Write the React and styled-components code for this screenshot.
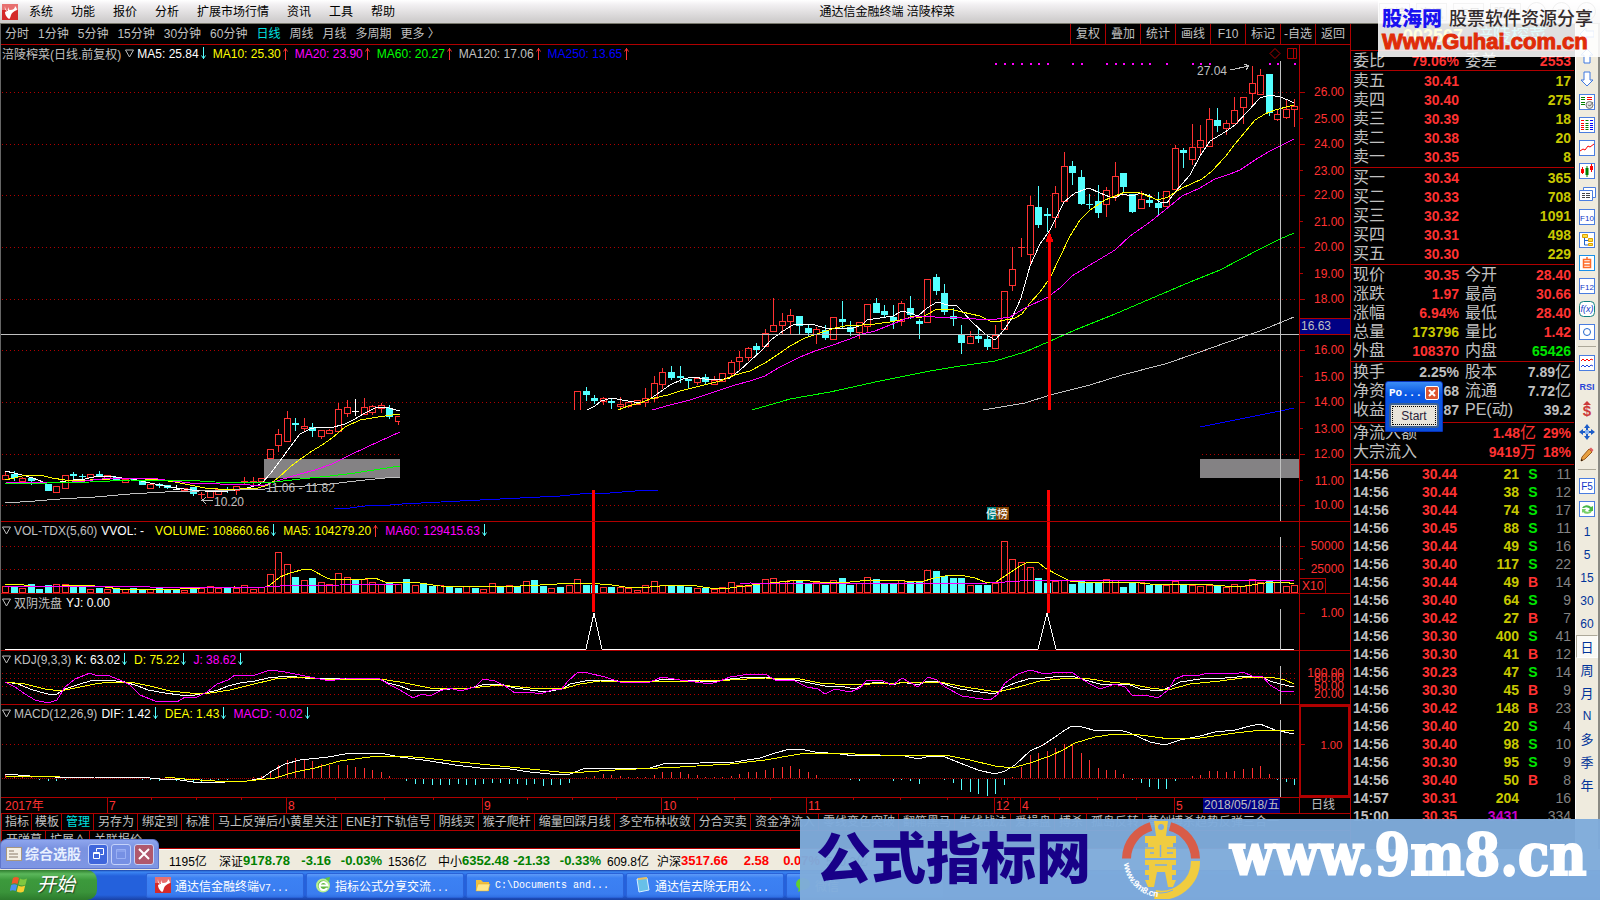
import React from 'react';
import styled, { createGlobalStyle, css } from 'styled-components';

const GlobalStyle = createGlobalStyle`
    * {
        box-sizing: border-box;
    }

    body {
        margin: 0;
        background: #000000;
        overflow: hidden;
        font-family: "Liberation Sans", "Noto Sans CJK SC", sans-serif;
        font-size: 12px;
    }

    button {
        font-family: inherit;
        font-size: inherit;
        padding: 0;
        margin: 0;
        border: 0;
        background: none;
        white-space: nowrap;
    }
`

const RED = '#ff3232';
const LINE = '#b00000';
const CYAN = '#54ffff';
const GREY = '#c0c0c0';
const YELLOW = '#ffff00';
const MAGENTA = '#ff00ff';

/* ---------- page frame ---------- */

const Page = styled.div`
    position: relative;
    display: flex;
    flex-direction: column;
    height: 100vh;
    background: #000000;
    overflow: hidden;
`

const MenuBar = styled.header`
    display: flex;
    align-items: center;
    height: 24px;
    flex: none;
    padding-left: 2px;
    background: linear-gradient(#ffffff, #f2f0f2 20%, #cfcdcd 90%);
    border-bottom: 1px solid #77776b;
`

const MenuList = styled.nav`
    display: flex;
    gap: 18px;
    margin-left: 11px;
`

const MenuButton = styled.button`
    color: #000000;
    line-height: 20px;
`

const WindowTitle = styled.h1`
    flex: 1;
    margin: 0;
    font-size: 12px;
    font-weight: normal;
    line-height: 20px;
    text-align: center;
    color: #000000;
`

const WindowTools = styled.div`
    display: flex;
    align-items: center;
    gap: 6px;
    padding-right: 4px;
`

const ToolTab = styled.button`
    width: 31px;
    height: 18px;
    border: 1px solid #999999;
    color: #333333;
`

const RoundTool = styled.button`
    width: 19px;
    height: 19px;
    border: 1px solid #777777;
    border-radius: 50%;
    line-height: 14px;
`

const Main = styled.main`
    display: flex;
    flex: 1;
    min-height: 0;
`

const ChartColumn = styled.section`
    display: flex;
    flex-direction: column;
    flex: 1;
    min-width: 0;
    border-left: 1px solid #666666;
`

/* ---------- period bar ---------- */

const PeriodBar = styled.div`
    display: flex;
    justify-content: space-between;
    height: 21px;
    flex: none;
    border-bottom: 1px solid ${LINE};
`

const PeriodList = styled.div`
    display: flex;
    gap: 9px;
    padding-left: 4px;
`

const PeriodButton = styled.button`
    color: ${props => props.$active ? '#00e0e0' : GREY};
    line-height: 20px;
`

const ActionList = styled.div`
    display: flex;
`

const ActionButton = styled.button`
    width: 35px;
    border-left: 1px solid ${LINE};
    color: ${GREY};
    line-height: 20px;
`

/* ---------- chart panels ---------- */

const Panel = styled.div`
    position: relative;
    display: flex;
    flex: ${props => props.$weight} 1 0;
    min-height: 0;
    border-bottom: 1px solid ${LINE};
`

const Plot = styled.svg`
    display: block;
    flex: 1;
    min-width: 0;
    height: 100%;
    shape-rendering: crispEdges;
`

const AxisBox = styled.div`
    width: 51px;
    flex: none;
    border-left: 1px solid ${LINE};
    ${props => props.$selected && css`
        border: 2px solid ${LINE};
    `}
`

const AxisPlot = styled.svg`
    display: block;
    width: 100%;
    height: 100%;
    font-size: 12px;
    shape-rendering: crispEdges;
`

const Legend = styled.div`
    position: absolute;
    top: 0;
    left: 1px;
    right: 51px;
    display: flex;
    align-items: center;
    height: 17px;
    white-space: nowrap;
    color: ${GREY};
`

const LegendName = styled.span`
    margin: 0 4px 0 3px;
`

const StockLegendName = styled.span`
    margin-right: 4px;
`

const LegendItem = styled.span`
    display: flex;
    align-items: center;
    gap: 2px;
    margin-left: ${props => props.$spaced ? '3px' : '0'};
    margin-right: ${props => props.$plain ? '11px' : '7px'};
    color: ${props => props.$color};
`

const LegendMarks = styled.svg`
    margin-left: auto;
`

/* ---------- date axis and tabs ---------- */

const DateRow = styled.div`
    display: flex;
    height: 16px;
    flex: none;
    border-bottom: 1px solid ${LINE};
`

const DatePlot = styled(Plot)`
    font-size: 12px;
`

const PeriodName = styled.div`
    width: 51px;
    padding-right: 4px;
    border-left: 1px solid ${LINE};
    color: ${GREY};
    line-height: 15px;
    text-align: center;
`

const TabRow = styled.div`
    display: flex;
    height: ${props => props.$last ? '18px' : '17px'};
    flex: none;
    overflow: hidden;
    border-bottom: 1px solid ${LINE};
`

const Tab = styled.button`
    flex: none;
    padding: ${props => props.$narrow ? '0 2px 0 3px' : '0 3px 0 4px'};
    border-left: 1px solid ${LINE};
    color: ${props => props.$active ? '#00e0e0' : GREY};
    line-height: 16px;
`

/* ---------- quote panel ---------- */

const QuotePanel = styled.aside`
    position: relative;
    width: 225px;
    flex: none;
    padding-right: 1px;
    overflow: hidden;
    border-left: 1px solid ${LINE};
    font-size: 14px;
`

const StockName = styled.div`
    display: flex;
    gap: 12px;
    height: 26px;
    padding-left: 52px;
    font-size: 18px;
    line-height: 24px;
    color: #00e0e0;

    b {
        color: ${YELLOW};
    }
`

const QuoteGroup = styled.div`
    border-top: 1px solid ${LINE};
    padding: 0 3px ${props => props.$bottom || 0}px 2px;
`

const QuoteTable = styled.table`
    width: 100%;
    table-layout: fixed;
    border-collapse: collapse;

    th, td {
        height: ${props => props.$rowHeight || 19}px;
        padding: 0;
        line-height: 18px;
        white-space: nowrap;
    }
`

const Label = styled.th`
    font-size: 16px;
    font-weight: normal;
    text-align: left;
    color: ${GREY};
    ${props => props.$second && css`
        && {
            padding-left: 6px;
        }
    `}
`

const Value = styled.td`
    font-weight: ${props => props.$light ? 'normal' : 'bold'};
    text-align: ${props => props.$align || 'right'};
    color: ${props => props.$color};
`

const Unit = styled.span`
    font-size: 16px;
    font-weight: normal;
`

/* small floating window over the quotes */
const Popup = styled.div`
    position: absolute;
    left: 34px;
    top: 357px;
    width: 58px;
    height: 51px;
    padding: 0 3px 3px;
    border: 1px solid #0831b8;
    border-radius: 3px 3px 0 0;
    background: linear-gradient(#3b8cf5, #0a58e4 12px, #0a4fdc);
`

const PopupTitle = styled.div`
    display: flex;
    justify-content: space-between;
    align-items: center;
    height: 21px;
    color: #ffffff;
    font-family: "Liberation Mono", monospace;
    font-size: 11px;
    font-weight: bold;
`

const PopupClose = styled.button`
    width: 14px;
    height: 14px;
    border: 1px solid #ffffff;
    border-radius: 2px;
    background: #dd5530;

    svg {
        display: block;
    }
`

const PopupButton = styled.button`
    display: block;
    width: 100%;
    height: 25px;
    border: 2px solid #3d6193;
    border-radius: 3px;
    background: #e8e4da;
    outline: 1px dotted #000000;
    outline-offset: -4px;
    color: #281c38;
    font-size: 12px;
`

/* ---------- side tool strip ---------- */

const SideBar = styled.nav`
    display: flex;
    flex-direction: column;
    width: 25px;
    flex: none;
    overflow: hidden;
    background: #efebde;
    border-left: 1px solid #ffffff;
    border-right: 2px solid #8a8a84;
`

const SideButton = styled.button`
    display: flex;
    align-items: center;
    justify-content: center;
    flex: none;
    height: ${props => props.$first ? '20px' : '23px'};
    color: #003399;
    font-size: ${props => props.$cjk ? '13px' : '12px'};
    ${props => props.$active && css`
        background: #fbfaf5;
        border: 1px solid #aca899;
        border-right-color: #ffffff;
        border-bottom-color: #ffffff;
    `}
`

const SideRule = styled.div`
    height: 8px;
    flex: none;
    margin: 0 2px;
    background: linear-gradient(#aca899, #aca899) 0 3px / 100% 1px no-repeat;
`

/* ---------- status bar, task bar ---------- */

const StatusBar = styled.footer`
    display: flex;
    align-items: center;
    height: 21px;
    flex: none;
    padding-left: 169px;
    background: #efebde;
    border-top: 1px solid #ffffff;
    white-space: nowrap;
    color: #000000;
`

const StatusGroup = styled.span`
    display: grid;
    grid-template-columns: ${props => props.$short ? '50px' : '24px 46px 42px 51px 56px'};
    align-items: center;
    flex: none;
`

const StatusNumber = styled.b`
    font-size: 13px;
    text-align: right;
    color: ${props => props.$up ? '#ff0000' : '#008000'};
`

const StatusTotal = styled.span`
    padding-left: ${props => props.$short ? '0' : '6px'};
`

const ToolWindow = styled.div`
    position: absolute;
    left: 0;
    bottom: 31px;
    display: flex;
    align-items: center;
    gap: 3px;
    width: 159px;
    height: 30px;
    padding: 0 4px 0 5px;
    border: 1px solid #6076cc;
    border-radius: 6px 6px 0 0;
    background: linear-gradient(#8ea6ee, #7a92e0 30%, #7e96e4);
`

const ToolWindowTitle = styled.span`
    flex: 1;
    font-size: 14px;
    font-weight: bold;
    line-height: 20px;
    color: #e8f0ff;
`

const FrameButton = styled.button`
    width: 20px;
    height: 21px;
    border: 1px solid #c4d2fa;
    border-radius: 3px;
    background: ${props => props.$color};

    svg {
        display: block;
        margin: auto;
    }
`

const TaskBar = styled.nav`
    display: flex;
    align-items: center;
    gap: 2px;
    height: 30px;
    flex: none;
    background: linear-gradient(#1941a5, #3b86f2 2px, #2461dc 6px, #2461dc 25px, #1941a5);
`

const StartButton = styled.button`
    display: flex;
    align-items: center;
    gap: 8px;
    width: 97px;
    height: 30px;
    margin-right: 47px;
    padding-left: 10px;
    border-radius: 0 10px 10px 0;
    background: linear-gradient(#2f7d2f, #5bb75b 4px, #3c9a3c 10px, #3a943a 22px, #2c7a2c);
    color: #ffffff;
    font-size: 19px;
    font-style: italic;
    line-height: 28px;
    text-shadow: 1px 1px 1px #224422;
`

const TaskButton = styled.button`
    display: flex;
    align-items: center;
    gap: 4px;
    width: 158px;
    height: 25px;
    flex: none;
    padding-left: 8px;
    border: 1px solid #2a62d8;
    border-radius: 2px;
    background: linear-gradient(#5e9bf8, #3c81f3 4px, #3a7df0 20px, #3070e4);
    color: #ffffff;
`

const Mono = styled.span`
    font-family: "Liberation Mono", monospace;
    font-size: 10px;
`

/* ---------- banners ---------- */

const TopBanner = styled.div`
    position: absolute;
    top: 0;
    right: 0;
    width: 222px;
    height: 57px;
    padding: 5px 0 0 4px;
    background: rgba(255, 255, 255, 0.88);
`

const BannerLine = styled.div`
    display: flex;
    gap: 7px;
    height: 27px;
    line-height: 28px;
    white-space: nowrap;
`

const BannerName = styled.span`
    font-size: 20px;
    font-weight: 900;
    color: #1a12f0;
`

const BannerNote = styled.span`
    font-size: 18px;
    font-weight: 500;
    color: #332b2b;
`

const BannerSite = styled.div`
    height: 22px;
    font-size: 22px;
    font-weight: bold;
    line-height: 20px;
    -webkit-text-stroke: 1px #e02c08;
    color: #e02c08;
`

const BottomBanner = styled.div`
    position: absolute;
    right: 0;
    bottom: 0;
    display: flex;
    align-items: center;
    width: 50%;
    height: 81px;
    padding-left: 16px;
    background: rgba(127, 171, 219, 0.97);
    white-space: nowrap;
`

const BannerTitle = styled.span`
    padding-bottom: 12px;
    font-family: "Noto Sans CJK SC", sans-serif;
    font-size: 55px;
    font-weight: 900;
    line-height: 68px;
    color: #180088;
`

const BannerLogo = styled.svg`
    width: 78px;
    height: 78px;
    flex: none;
    margin: 0 30px 0 31px;
`

const BannerAddress = styled.span`
    padding-bottom: 10px;
    font-family: "DejaVu Serif Condensed", "DejaVu Serif", serif;
    font-size: 57px;
    font-weight: bold;
    line-height: 68px;
    -webkit-text-stroke: 2px #ffffff;
    color: #ffffff;
`

/* ---------- data ---------- */

// kind, high, body top, body bottom, low, volume top
const CANDLES = `
r 472 475 479 479 586|c 471 474 478 481 587|r 477 478 481 481 588|c 477 478 481 485 584|c 482 482 483 483 589
c 484 484 491 491 585|r 486 486 492 492 584|r 475 475 488 488 584|c 472 474 476 479 586|c 474 476 477 480 585
r 474 474 477 477 589|c 471 474 476 477 588|r 475 475 478 478 589|c 477 477 480 480 589|r 479 479 482 482 589
c 478 478 480 480 588|c 481 481 485 485 589|r 484 484 488 488 589|c 483 484 486 488 588|c 485 485 488 489 589
w 485 489 489 490 589|r 488 488 490 490 590|c 487 487 494 496 588|r 492 494 494 499 588|r 491 491 497 497 586
r 489 489 494 494 588|c 487 490 490 493 588|r 486 486 490 495 588|r 477 481 482 485 585|r 477 481 481 485 589
r 478 478 481 481 587|r 449 449 458 458 574|r 429 434 445 452 552|r 411 418 441 441 564|c 418 423 425 431 577
r 418 426 428 432 580|c 423 427 431 437 578|r 430 430 436 439 582|r 429 430 433 433 584|r 403 409 431 431 573
r 400 407 413 417 577|w 399 411 411 416 580|r 398 407 414 414 579|r 405 406 412 415 582|r 403 405 408 413 584
c 405 408 417 419 583|r 416 416 421 425 584|c 416 418 424 428 579|r 430 430 434 434 585|c 430 430 434 434 583
c 430 430 434 434 586|r 430 430 434 434 585|c 430 430 434 434 587|c 430 430 434 434 588|r 430 430 434 434 586
c 430 430 434 434 588|r 430 430 434 434 589|r 430 430 434 434 583|c 430 430 434 434 587|r 430 430 434 434 585
c 430 430 434 434 586|r 430 430 434 434 581|c 430 430 434 434 580|c 430 430 434 434 586|r 430 430 434 434 588
c 430 430 434 434 587|r 430 430 434 434 585|r 391 391 425 425 579|c 387 391 395 401 585|c 395 398 401 404 585
r 397 398 401 405 587|c 399 401 403 409 587|r 397 404 406 408 587|r 402 402 406 408 588|r 400 400 404 404 590
r 388 398 402 407 585|r 376 383 398 402 581|r 368 372 384 389 585|c 366 372 378 380 585|c 366 376 378 383 586
c 379 379 381 388 587|r 378 378 382 385 588|c 374 377 382 384 588|r 376 380 384 384 589|r 373 373 381 381 587
r 360 362 373 377 582|r 351 357 361 370 585|r 347 348 357 361 586|c 343 346 350 354 585|r 329 333 346 346 579
r 298 325 331 331 578|r 313 321 325 334 581|r 309 315 321 334 580|c 316 316 326 334 580|c 325 328 333 336 584
r 327 329 334 344 582|c 325 330 338 340 585|r 317 317 339 339 580|c 301 319 322 328 578|c 321 327 332 336 585
r 322 322 332 339 583|r 304 304 326 333 577|c 298 303 313 313 579|c 305 311 315 317 583|c 305 317 321 329 584
r 301 303 321 326 580|c 296 308 315 319 582|c 319 321 324 339 582|r 279 279 322 322 570|c 274 277 291 295 571
c 284 293 312 315 576|c 308 316 319 326 578|c 325 334 343 354 578|r 331 336 343 343 585|c 328 336 339 343 585
c 335 339 347 350 585|r 325 335 348 348 583|r 291 291 329 329 541|r 247 269 285 291 559|r 238 247 247 257 562
r 196 205 254 264 567|c 186 207 225 228 578|c 208 214 216 232 583|r 186 193 217 228 581|r 152 166 201 201 580
c 161 166 173 185 584|c 170 177 204 205 580|c 194 204 205 209 582|c 185 201 213 218 582|r 187 190 204 217 579
r 162 176 196 201 580|c 173 173 187 193 587|c 194 194 212 213 582|r 191 199 208 208 582|c 194 200 203 207 585
c 192 203 208 215 584|r 191 191 206 206 585|r 145 148 189 189 581|c 148 150 153 168 585|r 124 147 159 165 585
r 125 140 147 156 586|r 108 119 146 146 585|c 108 120 126 132 585|r 120 123 128 135 587|r 97 110 123 123 584
r 97 97 107 124 586|r 66 83 93 107 579|r 69 75 94 94 582|c 74 74 113 116 581|r 110 114 119 121 582
r 100 109 117 119 586|r 99 106 109 127 585`
    .trim().split(/[|\n]/).map((row, i) => {
        const [kind, ...n] = row.split(' ');
        const [high, top, bottom, low, volume] = n.map(Number);
        return { kind, high, top, bottom, low, volume, x: candleX(i) };
    });

function candleX(i) {
    return Math.round(5 + i * 8.538);
}

const MACD_BARS = [
    3, 2, 1, 1, -1, -2, -2, -1, 1, 1, 1, 1, 1, 1, 1, 0, -1, -1, -2, -1, -2, -2, -3, -3, -2, -1, -1, 0, 0, 1,
    2, 7, 13, 18, 20, 19, 17, 14, 13, 13, 13, 11, 10, 8, 6, 2, 0, -2, -5, -5, -6, -6, -6, -5, -6, -6, -5, -4,
    -4, -5, -5, -6, -5, -7, -6, -6, -4, 0, 1, 2, 4, 3, 2, 1, 1, 1, 3, 6, 6, 6, 4, 3, 1, 1, 1, 2, 4, 6, 6, 8,
    10, 11, 12, 9, 6, 3, 0, 0, 0, -1, -2, 0, 0, 0, -2, -1, -2, -5, 0, 0, -1, -4, -11, -13, -15, -17, -15, -6,
    1, 11, 23, 25, 27, 30, 34, 33, 25, 18, 10, 8, 8, 4, -1, -4, -8, -10, -10, -2, 0, 2, 3, 7, 7, 6, 7, 9, 10,
    12, 4, -1, -3, -6,
];

const SIGNAL_DOTS = [116, 117, 118, 119, 120, 121, 122, 125, 126, 129, 130, 131, 132, 133, 134, 136, 139, 140, 141, 148, 149, 151];

const MAIN_LINES = [
    ['#ffffff', '5,471 14,473 22,475 33,478 43,482 50,483 60,482 73,480 85,479 98,476 110,476 122,478 133,479 145,482 160,485 176,488 192,490 205,491 222,492 235,490 247,488 258,485 263,482 270,474 280,461 290,447 300,434 310,429 318,427 330,428 345,424 355,419 365,413 375,408 385,407 400,411'],
    ['#ffffff', '587,410 595,406 601,401 612,398 622,400 634,402 643,402 650,399 660,392 670,385 683,379 694,377 705,379 718,380 730,378 740,370 750,361 762,350 772,339 783,331 793,325 803,324 815,325 825,328 840,329 853,328 862,325 867,320 880,318 893,316 902,311 910,313 918,316 927,308 937,302 948,305 957,306 962,311 972,322 985,334 995,340 1004,330 1012,318 1021,298 1030,266 1040,244 1050,230 1064,202 1075,193 1089,188 1100,193 1110,197 1115,198 1122,194 1132,196 1141,193 1150,196 1160,202 1167,203 1176,191 1190,175 1200,156 1210,141 1225,132 1235,125 1248,111 1260,98 1270,95 1280,97 1288,100 1294,103'],
    [YELLOW, '5,480 14,478 26,475 40,475 52,478 65,480 90,480 110,479 130,478 145,479 160,480 175,482 190,485 205,488 218,489 240,489 258,488 268,485 278,478 290,467 302,458 312,451 322,445 332,438 345,427 360,420 372,418 385,416 400,414'],
    [YELLOW, '618,410 628,406 640,403 650,399 668,395 680,391 700,386 720,381 735,375 750,371 765,363 780,353 790,346 805,338 820,333 835,328 845,326 862,325 875,324 890,322 905,319 913,316 920,318 928,314 937,309 950,309 962,312 980,316 990,321 996,322 1005,320 1015,318 1022,314 1030,303 1040,292 1050,278 1060,257 1070,236 1080,220 1090,210 1105,200 1115,196 1125,192 1140,193 1150,197 1158,200 1168,197 1182,188 1202,179 1212,171 1225,157 1235,144 1245,132 1255,120 1265,114 1275,110 1294,105'],
    [MAGENTA, '5,482 60,483 85,481 110,478 150,478 165,480 190,483 220,484 250,485 265,485 280,480 300,474 315,470 332,464 350,455 365,448 380,441 400,432'],
    [MAGENTA, '652,410 670,405 690,400 705,395 720,390 735,385 750,381 765,376 780,367 800,357 815,351 830,346 850,339 862,334 875,331 890,325 905,319 918,316 935,317 962,318 990,320 1010,317 1025,308 1048,297 1060,288 1072,276 1090,265 1115,250 1130,236 1150,222 1170,206 1182,196 1200,188 1215,179 1230,174 1240,170 1255,160 1270,151 1282,145 1294,139'],
    ['#00ff00', '5,484 90,482 130,480 200,481 215,482 255,483 275,482 300,479 330,476 355,473 380,469 400,466'],
    ['#00ff00', '752,410 790,399 830,392 880,381 930,371 960,366 995,361 1025,352 1048,342 1075,330 1115,314 1150,299 1190,282 1220,270 1260,249 1280,239 1294,233'],
    [GREY, '5,503 35,501 60,499 95,497 130,494 165,492 200,491 235,490 265,489 275,487 305,486 330,484 365,480 385,478 400,477'],
    [GREY, '983,410 1025,403 1050,395 1090,385 1122,375 1165,364 1200,352 1225,343 1260,331 1294,317'],
    ['#0000ff', '334,508 350,508 365,506 390,505 402,504 460,501 560,496 580,494 610,493 635,491 658,490'],
    ['#0000ff', '1200,427 1215,424 1250,417 1280,411 1294,408'],
];

const VOLUME_LINES = [
    [YELLOW, '5,584 18,584 30,586 55,587 62,586 85,585 105,587 120,589 180,589 200,588 235,587 262,588 270,585 280,577 290,573 305,569 312,570 325,577 332,580 350,579 365,579 375,578 385,582 400,582 420,583 440,586 500,587 540,585 575,583 600,584 612,585 625,587 640,588 660,586 690,585 710,588 730,588 745,586 760,584 780,582 800,580 820,582 850,582 870,580 905,581 920,582 935,578 945,576 960,575 975,578 985,582 996,582 1008,574 1020,566 1028,562 1038,562 1045,568 1058,575 1070,581 1080,582 1130,582 1150,584 1200,584 1225,586 1245,586 1265,583 1285,582 1294,584'],
    [MAGENTA, '5,586 145,586 150,587 265,587 280,586 340,585 400,584 740,584 750,583 800,584 990,583 1020,581 1140,580 1294,580'],
];

const KDJ_LINES = [
    ['#ffffff', '5,682 18,684 30,689 40,692 48,694 57,694 65,689 80,684 90,681 107,680 125,682 138,686 148,690 165,693 180,695 195,695 205,693 218,690 228,686 240,683 255,681 268,678 288,676 305,678 325,679 345,678 365,679 380,679 388,683 400,686 410,690 430,691 450,689 470,688 482,685 500,684 515,688 530,690 545,692 562,689 570,684 585,681 610,680 625,682 650,682 663,679 680,680 700,681 715,682 730,679 750,677 767,677 775,679 795,680 810,683 825,686 840,686 855,689 865,684 880,682 893,685 902,682 918,685 928,681 940,682 950,686 960,689 980,692 995,694 1003,688 1015,683 1028,679 1045,678 1062,676 1075,677 1085,680 1100,684 1128,684 1140,689 1160,691 1170,687 1180,682 1200,679 1225,678 1250,676 1260,676 1270,681 1280,684 1294,687'],
    [YELLOW, '5,682 25,684 45,689 60,691 75,688 95,684 110,682 130,682 150,686 170,691 190,693 210,693 230,690 250,685 275,679 300,677 320,679 380,679 400,682 430,688 470,688 500,685 530,688 562,689 580,684 600,681 650,682 700,681 730,680 765,678 800,679 820,683 850,685 870,684 900,683 940,682 965,687 997,692 1015,688 1040,681 1070,678 1090,679 1110,682 1130,684 1150,688 1168,690 1190,684 1220,681 1250,677 1270,677 1285,680 1294,684'],
    [MAGENTA, '5,682 15,687 25,694 35,700 48,703 57,700 65,687 75,679 90,673 97,676 107,675 120,680 130,685 140,695 155,701 177,702 185,697 195,698 207,692 217,684 228,680 235,675 255,675 270,670 285,672 300,675 320,679 330,681 345,678 380,679 388,684 400,690 413,698 422,694 430,696 440,691 450,688 460,691 475,687 483,679 495,681 505,686 515,693 530,692 540,694 552,690 562,689 568,681 578,672 588,673 605,677 620,682 650,682 662,677 680,680 710,684 720,681 730,677 750,674 767,675 775,680 795,681 807,687 818,689 825,694 835,689 850,692 860,688 867,680 880,680 893,685 902,678 918,687 928,677 937,680 945,687 962,696 975,698 990,700 997,695 1005,683 1018,674 1030,670 1045,674 1060,672 1072,672 1080,678 1090,684 1100,689 1115,684 1125,687 1132,695 1145,695 1158,698 1168,690 1175,679 1185,675 1200,675 1208,673 1235,674 1243,672 1252,676 1262,676 1270,685 1280,691 1294,692'],
];

const MACD_LINES = [
    ['#ffffff', '5,774 30,776 50,776 60,778 95,777 140,777 160,779 180,780 200,783 225,782 247,781 262,778 272,771 285,764 300,760 328,757 345,754 370,753 385,754 400,757 430,761 455,765 480,768 510,769 530,772 560,775 570,774 583,769 605,768 650,768 663,764 700,763 735,762 760,758 775,753 790,749 805,750 815,752 840,754 855,756 880,755 905,756 918,759 930,756 945,757 960,763 978,770 995,774 1005,771 1015,765 1030,751 1043,745 1055,737 1065,730 1072,726 1082,727 1097,731 1120,730 1130,733 1150,742 1165,745 1180,740 1200,736 1215,732 1235,730 1250,726 1260,724 1275,730 1294,734'],
    [YELLOW, '5,776 60,777 165,777 185,779 215,781 247,781 275,778 295,772 315,768 340,761 370,757 400,756 425,758 460,762 500,766 530,769 568,773 615,770 680,767 730,764 765,760 800,754 830,753 880,755 950,756 970,760 995,766 1012,768 1030,763 1050,756 1065,749 1075,743 1095,737 1115,734 1140,735 1170,739 1200,738 1235,733 1262,730 1285,730 1294,731'],
];

const MONTHS = [['7', 107], ['8', 286], ['9', 482], ['10', 661], ['11', 806], ['12', 994], ['4', 1020], ['5', 1174]];
const WEEK_TICKS = [151, 196, 241, 335, 384, 433, 527, 572, 616, 697, 734, 770, 853, 900, 947, 1001, 1007, 1014, 1059, 1097, 1136];

const MENU = ['系统', '功能', '报价', '分析', '扩展市场行情', '资讯', '工具', '帮助'];
const PERIODS = ['分时', '1分钟', '5分钟', '15分钟', '30分钟', '60分钟', '日线', '周线', '月线', '多周期', '更多 〉'];
const ACTIONS = ['复权', '叠加', '统计', '画线', 'F10', '标记', '-自选', '返回'];
const TABS = [
    '指标', '模板', '管理', '另存为', '绑定到', '标准', '马上反弹后小黄星关注', 'ENE打下轨信号', '阴线买', '猴子爬杆',
    '缩量回踩月线', '多空布林收敛', '分合买卖', '资金净流入', '零线变色突破', '翻箱黑马', '牛线战法', '爱操盘', '搏杀',
    '孤岛反转', '草创搏杀趋势反弹三合一',
];

const SELL = [['卖五', '30.41', '17'], ['卖四', '30.40', '275'], ['卖三', '30.39', '18'], ['卖二', '30.38', '20'], ['卖一', '30.35', '8']];
const BUY = [['买一', '30.34', '365'], ['买二', '30.33', '708'], ['买三', '30.32', '1091'], ['买四', '30.31', '498'], ['买五', '30.30', '229']];
const DETAIL = [
    ['现价', '30.35', RED, '今开', '28.40', RED],
    ['涨跌', '1.97', RED, '最高', '30.66', RED],
    ['涨幅', '6.94%', RED, '最低', '28.40', RED],
    ['总量', '173796', '#c8c800', '量比', '1.42', RED],
    ['外盘', '108370', RED, '内盘', '65426', '#00e600'],
];
const SHARES = [
    ['换手', '2.25%', GREY, '股本', '7.89亿', GREY],
    ['净资', '68', GREY, '流通', '7.72亿', GREY],
    ['收益', '87', GREY, 'PE(动)', '39.2', GREY],
];
const TRADES = `14:56 30.44 21 S 11
14:56 30.44 38 S 12
14:56 30.44 74 S 17
14:56 30.45 88 S 11
14:56 30.44 49 S 16
14:56 30.40 117 S 22
14:56 30.44 49 B 14
14:56 30.40 64 S 9
14:56 30.42 27 B 7
14:56 30.30 400 S 41
14:56 30.30 41 B 12
14:56 30.23 47 S 14
14:56 30.30 45 B 9
14:56 30.42 148 B 23
14:56 30.40 20 S 4
14:56 30.40 98 S 10
14:56 30.30 95 S 9
14:56 30.40 50 B 8
14:57 30.31 204 - 16
15:00 30.35 3431 - 334`.split('\n').map(row => row.split(' '));

/* ---------- chart pieces ---------- */

const Lines = ({ lines }) => lines.map(([color, points], i) => (
    <polyline key={i} points={points} fill="none" stroke={color} />
));

const Grid = ({ rows }) => rows.map(y => (
    <line key={y} x1="2" x2="1298" y1={y + 0.5} y2={y + 0.5} stroke={LINE} strokeDasharray="1 3" />
));

const Cursor = ({ from, to }) => <rect x="1280" y={from} width="1" height={to - from} fill={GREY} />;

const Candle = ({ x, kind, high, top, bottom, low }) => {
    const color = kind === 'r' ? RED : kind === 'c' ? CYAN : '#ffffff';
    return (
        <g fill={color}>
            {top > high && <rect x={x} y={high} width="1" height={top - high} />}
            {low > bottom && <rect x={x} y={bottom} width="1" height={low - bottom} />}
            {kind === 'r' && bottom - top > 1
                ? <rect x={x - 2.5} y={top + 0.5} width="6" height={bottom - top} fill="none" stroke={RED} />
                : <rect x={x - 3} y={top} width="7" height={Math.max(bottom - top, 1)} />}
        </g>
    );
};

const Volume = ({ x, kind, volume }) => kind === 'r'
    ? <rect x={x - 2.5} y={volume + 0.5} width="6" height={592 - volume} fill="none" stroke={RED} />
    : <rect x={x - 3} y={volume} width="7" height={593 - volume} fill={CYAN} />;

const Axis = ({ top, height, labels, ticks = [], selected, children }) => (
    <AxisBox $selected={selected}>
        <AxisPlot viewBox={`0 ${top} 50 ${height}`} preserveAspectRatio="none">
            {ticks.map(([y, size]) => <rect key={y} x="0" y={y} width={size} height="1" fill={LINE} />)}
            {labels.map(([text, y]) => (
                <text key={text} x="44" y={y + 4} textAnchor="end" fill={RED}>{text}</text>
            ))}
            {children}
        </AxisPlot>
    </AxisBox>
);

const Arrow = ({ up }) => (
    <svg width="5" height="13" viewBox="0 0 5 13" fill="none" stroke={up ? RED : CYAN}>
        {up ? <path d="M2.5 13V1M0.5 4.5l2-3l2 3" /> : <path d="M2.5 0v12M0.5 8.5l2 3l2-3" />}
    </svg>
);

const Fold = () => (
    <svg width="9" height="9" viewBox="0 0 9 9" fill="none" stroke={GREY}>
        <path d="M0.5 1h8l-4 7z" />
    </svg>
);

// items: [text, colour, 'up' | 'down' | undefined]
const PanelLegend = ({ name, items, foldLast, children }) => (
    <Legend>
        {foldLast
            ? <><StockLegendName>{name}</StockLegendName><Fold /></>
            : <><Fold /><LegendName>{name}</LegendName></>}
        {items.map(([text, color, way], i) => (
            <LegendItem key={text} $color={color} $plain={!way} $spaced={foldLast && i === 0}>
                {text}
                {way && <Arrow up={way === 'up'} />}
            </LegendItem>
        ))}
        {children}
    </Legend>
);

const MainPanel = () => (
    <Panel $weight={476}>
        <Plot viewBox="1 45 1298 476" preserveAspectRatio="none">
            <Grid rows={[92, 144, 195, 247, 299, 350, 402, 454, 505]} />
            <rect x="264" y="459" width="1035" height="19" fill="#848284" />
            {CANDLES.map(c => <Candle key={c.x} {...c} />)}
            <rect x="400" y="410" width="800" height="80" fill="#000000" />
            <Lines lines={MAIN_LINES} />
            <rect x="1" y="334" width="1298" height="1" fill={GREY} />
            <Cursor from={61} to={521} />
            {SIGNAL_DOTS.map(i => <rect key={i} x={candleX(i)} y="63" width="2" height="2" fill={MAGENTA} />)}
            <rect x="592" y="490" width="3" height="31" fill="#ff0000" />
            <rect x="1047" y="490" width="3" height="31" fill="#ff0000" />
            <rect x="1048" y="240" width="3" height="170" fill="#ff0000" />
            <path d="M1049.5 231l4 11h-8z" fill="#ff0000" />
            <g fill={GREY} fontSize="12">
                <text x="1197" y="75">27.04</text>
                <text x="214" y="506">10.20</text>
                <text x="266" y="492">11.06 - 11.82</text>
            </g>
            <g fill="none" stroke={GREY}>
                <path d="M1230 70L1249 66M1244 64l5 2l-3 4" />
                <path d="M213 500.5h-11M206 497l-4 3.5l4 3" />
            </g>
            <rect x="987" y="507" width="9" height="13" fill="#008080" />
            <rect x="996" y="507" width="13" height="13" fill="#804000" />
            <g fill="#ffffff" fontSize="11">
                <text x="986" y="518">停</text>
                <text x="997" y="518">榜</text>
            </g>
        </Plot>
        <PanelLegend
            foldLast
            name="涪陵榨菜(日线.前复权)"
            items={[
                ['MA5: 25.84', '#ffffff', 'down'], ['MA10: 25.30', YELLOW, 'up'], ['MA20: 23.90', MAGENTA, 'up'],
                ['MA60: 20.27', '#00ff00', 'up'], ['MA120: 17.06', GREY, 'up'], ['MA250: 13.65', '#0000ff', 'up'],
            ]}
        >
            <LegendMarks width="30" height="13" viewBox="0 0 30 13" fill="none" stroke={LINE}>
                <path d="M6 1.5l5 5l-5 5l-5-5zM18.5 1.5h9v10h-9zM24.5 1.5v10" />
            </LegendMarks>
        </PanelLegend>
        <Axis
            top={45}
            height={476}
            ticks={[92, 144, 195, 247, 299, 350, 402, 454, 505].map(y => [y, 5]).concat([118, 170, 221, 273, 376, 428, 480].map(y => [y, 3]))}
            labels={[
                ['26.00', 92], ['25.00', 119], ['24.00', 144], ['23.00', 171], ['22.00', 195], ['21.00', 222],
                ['20.00', 247], ['19.00', 274], ['18.00', 299], ['16.00', 350], ['15.00', 377], ['14.00', 402],
                ['13.00', 429], ['12.00', 454], ['11.00', 481], ['10.00', 505],
            ]}
        >
            <rect x="0" y="318" width="50" height="17" fill="#000084" />
            <path d="M0 318.5h50M0 334.5h50" stroke={LINE} />
            <text x="1" y="330" fill={GREY}>16.63</text>
        </Axis>
    </Panel>
);

const VolumePanel = () => (
    <Panel $weight={71}>
        <Plot viewBox="1 522 1298 71" preserveAspectRatio="none">
            <Grid rows={[546, 569]} />
            {CANDLES.map(c => <Volume key={c.x} {...c} />)}
            <Lines lines={VOLUME_LINES} />
            <Cursor from={537} to={593} />
            <rect x="592" y="522" width="3" height="71" fill="#ff0000" />
            <rect x="1047" y="522" width="3" height="71" fill="#ff0000" />
        </Plot>
        <PanelLegend
            name="VOL-TDX(5,60)"
            items={[
                ['VVOL: -', '#ffffff'], ['VOLUME: 108660.66', YELLOW, 'down'],
                ['MA5: 104279.20', YELLOW, 'up'], ['MA60: 129415.63', MAGENTA, 'down'],
            ]}
        />
        <Axis top={522} height={71} ticks={[[546, 5], [558, 3], [569, 5]]} labels={[['50000', 546], ['25000', 569]]}>
            <path d="M0 578.5h25.5V593" fill="none" stroke={LINE} />
            <text x="2" y="590" fill={RED}>X10</text>
        </Axis>
    </Panel>
);

const SignalPanel = () => (
    <Panel $weight={56}>
        <Plot viewBox="1 594 1298 56" preserveAspectRatio="none">
            <polyline points="5,649 586,649 594,613 602,649 1038,649 1047,613 1056,649 1294,649" fill="none" stroke="#ffffff" />
            <Cursor from={609} to={650} />
            <rect x="592" y="594" width="3" height="18" fill="#ff0000" />
            <rect x="1047" y="594" width="3" height="19" fill="#ff0000" />
        </Plot>
        <PanelLegend name="双阴洗盘" items={[['YJ: 0.00', '#ffffff']]} />
        <Axis top={594} height={56} ticks={[[613, 5]]} labels={[['1.00', 613]]} />
    </Panel>
);

const KdjPanel = () => (
    <Panel $weight={53}>
        <Plot viewBox="1 651 1298 53" preserveAspectRatio="none">
            <Grid rows={[673, 678, 686, 694]} />
            <Lines lines={KDJ_LINES} />
            <Cursor from={666} to={704} />
        </Plot>
        <PanelLegend
            name="KDJ(9,3,3)"
            items={[['K: 63.02', '#ffffff', 'down'], ['D: 75.22', YELLOW, 'down'], ['J: 38.62', MAGENTA, 'down']]}
        />
        <Axis top={651} height={53} labels={[['100.00', 673], ['80.00', 678], ['50.00', 686], ['20.00', 694]]} />
    </Panel>
);

const MacdPanel = () => (
    <Panel $weight={92}>
        <Plot viewBox="1 705 1298 92" preserveAspectRatio="none">
            <Grid rows={[744]} />
            <line x1="2" x2="1298" y1="778.5" y2="778.5" stroke={LINE} strokeDasharray="1 1" />
            {MACD_BARS.map((v, i) => v !== 0 && (
                <rect
                    key={i}
                    x={candleX(i)}
                    y={v > 0 ? 778 - v : 779}
                    width="1"
                    height={Math.abs(v)}
                    fill={v > 0 ? RED : CYAN}
                />
            ))}
            <Lines lines={MACD_LINES} />
            <Cursor from={720} to={797} />
        </Plot>
        <PanelLegend
            name="MACD(12,26,9)"
            items={[['DIF: 1.42', '#ffffff', 'down'], ['DEA: 1.43', YELLOW, 'down'], ['MACD: -0.02', MAGENTA, 'down']]}
        />
        <Axis selected top={705} height={92} ticks={[[744, 4]]} labels={[['1.00', 745]]} />
    </Panel>
);

const DateAxis = () => (
    <DateRow>
        <DatePlot viewBox="1 798 1298 15" preserveAspectRatio="none">
            <text x="5" y="810" fill={RED}>2017年</text>
            {MONTHS.map(([name, x]) => (
                <g key={x}>
                    <rect x={x} y="798" width="1" height="15" fill={LINE} />
                    <text x={x + 2} y="810" fill={RED}>{name}</text>
                </g>
            ))}
            {WEEK_TICKS.map(x => <rect key={x} x={x} y="798" width="1" height="2" fill={LINE} />)}
            <rect x="1203" y="798" width="77" height="15" fill="#000084" />
            <text x="1204" y="809" fill={GREY}>2018/05/18/五</text>
        </DatePlot>
        <PeriodName>日线</PeriodName>
    </DateRow>
);

/* ---------- quote pieces ---------- */

// numbers are bold, the unit after them is not
const Amount = ({ text }) => {
    const unit = text.match(/[亿万]$/);
    return unit ? <>{text.slice(0, -1)}<Unit>{unit[0]}</Unit></> : text;
};

const PairRows = ({ rows }) => (
    <QuoteTable>
        <colgroup><col width="32" /><col width="74" /><col width="38" /><col width="74" /></colgroup>
        <tbody>
            {rows.map(([a, av, ac, b, bv, bc]) => (
                <tr key={a}>
                    <Label>{a}</Label>
                    <Value $color={ac}>{av}</Value>
                    <Label $second>{b}</Label>
                    <Value $color={bc}><Amount text={bv} /></Value>
                </tr>
            ))}
        </tbody>
    </QuoteTable>
);

const OrderRows = ({ rows }) => (
    <QuoteTable>
        <colgroup><col width="32" /><col width="74" /><col width="112" /></colgroup>
        <tbody>
            {rows.map(([name, price, count]) => (
                <tr key={name}>
                    <Label>{name}</Label>
                    <Value $color={RED}>{price}</Value>
                    <Value $color="#c8c800">{count}</Value>
                </tr>
            ))}
        </tbody>
    </QuoteTable>
);

const FlowRows = () => (
    <QuoteTable>
        <colgroup><col width="64" /><col width="119" /><col width="35" /></colgroup>
        <tbody>
            {[['净流入额', '1.48亿', '29%'], ['大宗流入', '9419万', '18%']].map(([name, sum, part]) => (
                <tr key={name}>
                    <Label>{name}</Label>
                    <Value $color={RED}><Amount text={sum} /></Value>
                    <Value $color={RED}>{part}</Value>
                </tr>
            ))}
        </tbody>
    </QuoteTable>
);

const TradeRows = () => (
    <QuoteTable $rowHeight={18}>
        <colgroup><col width="44" /><col width="60" /><col width="62" /><col width="28" /><col width="24" /></colgroup>
        <tbody>
            {TRADES.map(([time, price, count, side, deals], i) => (
                <tr key={i}>
                    <Value $align="left" $color={GREY}>{time}</Value>
                    <Value $color={RED}>{price}</Value>
                    <Value $color={count === '3431' ? '#c800c8' : '#c8c800'}>{count}</Value>
                    <Value $align="center" $color={side === 'S' ? '#00e600' : RED}>{side === '-' ? '' : side}</Value>
                    <Value $light $color="#848484">{deals}</Value>
                </tr>
            ))}
        </tbody>
    </QuoteTable>
);

const Quotes = () => (
    <QuotePanel>
        <StockName><b>002507</b><span>涪陵榨菜</span></StockName>
        <QuoteGroup>
            <PairRows rows={[['委比', '79.06%', RED, '委差', '2553', RED]]} />
        </QuoteGroup>
        <QuoteGroup $bottom={1}><OrderRows rows={SELL} /></QuoteGroup>
        <QuoteGroup $bottom={1}><OrderRows rows={BUY} /></QuoteGroup>
        <QuoteGroup $bottom={1}><PairRows rows={DETAIL} /></QuoteGroup>
        <QuoteGroup $bottom={3}><PairRows rows={SHARES} /></QuoteGroup>
        <QuoteGroup $bottom={3}><FlowRows /></QuoteGroup>
        <QuoteGroup><TradeRows /></QuoteGroup>
        <Popup>
            <PopupTitle>
                Po...
                <PopupClose aria-label="关闭">
                    <svg width="12" height="12" viewBox="0 0 12 12" stroke="#ffffff" strokeWidth="2"><path d="M3 3l6 6M9 3l-6 6" /></svg>
                </PopupClose>
            </PopupTitle>
            <PopupButton>Start</PopupButton>
        </Popup>
    </QuotePanel>
);

/* ---------- side icons ---------- */

const Frame = ({ children, color = '#4a7de0' }) => (
    <svg width="16" height="16" viewBox="0 0 16 16">
        <rect x="0.5" y="0.5" width="15" height="15" fill="#ffffff" stroke={color} />
        {children}
    </svg>
);

const FrameText = ({ children }) => (
    <text x="8" y="12" fontSize="8" textAnchor="middle" fill="#1238c8">{children}</text>
);

const BlockArrow = ({ turn }) => (
    <svg width="14" height="16" viewBox="0 0 14 16">
        <path d="M7 1l6 6h-3v8H4V7H1z" fill="#ffffff" stroke="#3f78e0" transform={`rotate(${turn} 7 8)`} />
    </svg>
);

const ICONS = {
    left: <BlockArrow turn={270} />,
    up: <BlockArrow turn={0} />,
    down: <BlockArrow turn={180} />,
    list: (
        <Frame>
            <path d="M2 3.5h4M2 5.5h4M2 8.5h4M2 10.5h4" stroke="#008000" />
            <path d="M8 3.5h5M8 5.5h5" stroke="#ff0000" />
            <circle cx="10.5" cy="11" r="3.5" fill="#dddddd" stroke="#777777" />
            <path d="M9 11l2 1l3-4" stroke="#777777" fill="none" />
        </Frame>
    ),
    columns: (
        <Frame>
            <path d="M2 3.5h3M2 6.5h3M2 8.5h3M2 10.5h3M2 12.5h3" stroke="#ff0000" />
            <path d="M6.5 3.5h3M6.5 6.5h3M6.5 8.5h3M6.5 10.5h3M6.5 12.5h3" stroke="#008000" />
            <path d="M11 3.5h3M11 6.5h3M11 8.5h3M11 10.5h3M11 12.5h3" stroke="#0000ff" />
        </Frame>
    ),
    trend: <Frame><path d="M1 11l3-2l2 1l3-4l2 1l4-3" fill="none" stroke="#ff0000" /></Frame>,
    candles: (
        <Frame>
            <path d="M3.5 4v7M12.5 1v8" stroke="#ff0000" />
            <path d="M8 3v11" stroke="#008000" />
            <path d="M2 6h3v4H2zM11 3h3v4h-3z" fill="#ff0000" />
            <path d="M6.5 5h3v7h-3z" fill="#008000" />
        </Frame>
    ),
    pages: (
        <svg width="17" height="16" viewBox="0 0 17 16" fill="#ffffff" stroke="#4a7de0">
            <path d="M4.5 1.5h12v10h-12z" />
            <path d="M0.5 4.5h13v10h-13z" />
            <path d="M3 7.5h3M7 7.5h4M3 9.5h3M7 9.5h4M3 11.5h3M7 11.5h4" stroke="#444444" />
        </svg>
    ),
    f10: <Frame><FrameText>F10</FrameText></Frame>,
    tree: (
        <Frame>
            <path d="M5.5 5v8h4M5.5 8.5h4" fill="none" stroke="#2266cc" />
            <path d="M3.5 2.5h5v3h-5zM9.5 6.5h4v3h-4zM9.5 11.5h4v2h-4z" fill="#ffe040" stroke="#dda000" />
        </Frame>
    ),
    own: (
        <Frame color="#1a90e8">
            <path d="M4.5 4.5h7v8h-7zM4.5 7h7M4.5 10h7M8 2v2" fill="none" stroke="#ff6a28" strokeWidth="1.5" />
        </Frame>
    ),
    f12: <Frame><FrameText>F12</FrameText></Frame>,
    fx: (
        <svg width="16" height="16" viewBox="0 0 16 16">
            <rect x="0.5" y="0.5" width="15" height="15" rx="4" fill="#ffffff" stroke="#108080" />
            <text x="8" y="11" fontSize="9" fontStyle="italic" textAnchor="middle" fill="#1238c8">f(x)</text>
        </svg>
    ),
    ring: <Frame><circle cx="8" cy="8" r="3.5" fill="none" stroke="#2266cc" /></Frame>,
    waves: (
        <Frame>
            <path d="M2 6l2-2l2 2l2-2l2 2l2-2l2 1" fill="none" stroke="#ff0000" />
            <path d="M2 12l2-2l2 2l2-2l2 2l2-2l2 1" fill="none" stroke="#2244dd" />
        </Frame>
    ),
    rsi: (
        <svg width="18" height="14" viewBox="0 0 18 14">
            <text x="9" y="11" fontSize="9" fontWeight="bold" textAnchor="middle" fill="#2844d8">RSI</text>
        </svg>
    ),
    money: (
        <svg width="14" height="16" viewBox="0 0 14 16">
            <text x="7" y="15" fontSize="15" fontWeight="bold" textAnchor="middle" fill="#cc3a3a">$</text>
            <path d="M7 0l4 4H3z" fill="#cc3a3a" />
        </svg>
    ),
    move: (
        <svg width="16" height="16" viewBox="0 0 16 16">
            <path d="M8 0l3 4H5zM8 16l3-4H5zM0 8l4-3v6zM16 8l-4-3v6z" fill="#1c5cc8" />
            <path d="M8 3v10M3 8h10" stroke="#1c5cc8" strokeWidth="2" />
            <rect x="6" y="6" width="4" height="4" fill="#8ab4f0" />
        </svg>
    ),
    pencil: (
        <svg width="16" height="16" viewBox="0 0 16 16">
            <path d="M2 14l1-4l7-8l3 3l-7 7z" fill="#e8a040" stroke="#9a5a18" />
            <path d="M10 2l2-1.5l2.5 2.5L13 5z" fill="#e06060" />
            <path d="M2 14l0.5-2l1.5 1.3z" fill="#000000" />
        </svg>
    ),
    f5: <Frame><text x="8" y="12" fontSize="10" textAnchor="middle" fill="#1238c8">F5</text></Frame>,
    refresh: (
        <Frame>
            <path d="M3 7a5 4 0 0 1 9-1l2-1v5H9l2-2a4 3 0 0 0-6-1z" fill="#48b848" />
            <path d="M13 10a5 4 0 0 1-9 1l-1 1V8h4l-1 2a4 3 0 0 0 5 0z" fill="#78d068" />
        </Frame>
    ),
};

const SIDE = [
    'left', 'up', 'down', 'list', 'columns', 'trend', 'candles', 'pages', 'f10', 'tree', 'own', 'f12', 'fx', 'ring', '|',
    'waves', 'rsi', 'money', 'move', 'pencil', '|',
    'f5', 'refresh', '1', '5', '15', '30', '60', '日', '周', '月', 'N', '多', '季', '年',
];

const Side = () => (
    <SideBar>
        {SIDE.map((name, i) => name === '|'
            ? <SideRule key={i} />
            : (
                <SideButton key={i} aria-label={name} $first={i === 0} $active={name === '日'} $cjk={/[日周月多季年]/.test(name)}>
                    {ICONS[name] || name}
                </SideButton>
            ))}
    </SideBar>
);

/* ---------- logos ---------- */

const TdxLogo = () => (
    <svg width="16" height="16" viewBox="0 0 16 16">
        <rect width="16" height="16" fill="#d42a2a" />
        <path d="M0 0h16v6H0z" fill="#e87070" />
        <path d="M3 2q-1 4 2 5l-2 1q0 4 4 7q1 0 2-4q1-3 6-5q0-2-2-4q0 4-5 4q-2 0-1-3q-2 2-1 4q-3-1-3-5z" fill="#ffffff" />
    </svg>
);

const FlagLogo = () => (
    <svg width="19" height="18" viewBox="0 0 19 18">
        <path d="M3 2q3-2 6 0l-1.5 6q-3-1.5-6 0z" fill="#f0582a" />
        <path d="M10 2.5q3 2 7 0l-1.5 6q-3 2-7 0z" fill="#80c840" />
        <path d="M1.2 9q3-1.5 6 0l-1.5 6q-3-1.5-6 0z" fill="#4a90f0" />
        <path d="M8.2 9.5q3 2 7 0l-1.5 6q-3 2-7 0z" fill="#f8d030" />
    </svg>
);

const GlobeLogo = () => (
    <svg width="16" height="16" viewBox="0 0 16 16">
        <circle cx="8" cy="8.5" r="6" fill="#60b840" stroke="#b8f090" strokeWidth="2" />
        <path d="M12 11a4 4 0 1 1 0.500-2.500H5" fill="none" stroke="#ffffff" strokeWidth="2" />
        <path d="M10 1l5-1l-1 5z" fill="#60c840" />
    </svg>
);

const FolderLogo = () => (
    <svg width="16" height="16" viewBox="0 0 16 16">
        <path d="M1 3h5l2 2h6v9H1z" fill="#f0c040" />
        <path d="M3 7h12l-2 7H1z" fill="#ffe88a" stroke="#d8a828" strokeWidth="0.5" />
    </svg>
);

const NoteLogo = () => (
    <svg width="16" height="16" viewBox="0 0 16 16">
        <path d="M2 2l10-1l2 12l-10 2z" fill="#68c0e8" stroke="#d8f0ff" />
        <path d="M3 2l9-1" stroke="#e8c060" strokeWidth="2" />
    </svg>
);

const ChatLogo = () => (
    <svg width="16" height="16" viewBox="0 0 16 16">
        <ellipse cx="8" cy="7" rx="7" ry="6" fill="#60d030" />
        <path d="M4 11l-1 4l4-2z" fill="#60d030" />
    </svg>
);

const CoinLogo = () => (
    <BannerLogo viewBox="0 0 78 78">
        <g fill="none" strokeWidth="9">
            <path d="M4.5 37.5A34 34 0 0 1 29 5.5M48 5.5A34 34 0 0 1 73.5 37.5" stroke="#d85c48" />
            <path d="M73.5 40A34 34 0 0 1 33 73.5" stroke="#f0cc40" />
        </g>
        <path d="M32 0h14l-2 15h-10z" fill="#f0cc40" />
        <path d="M23 15h31v7h-3v4h3v11H23V26h3v-4h-3z" fill="#f0cc40" />
        <path d="M23 39h31v5h-4v5h4v5h-4v5h4l-3 7H46l-3-15h-8l-3 15h-6l-3-7h4v-5h-4v-5h4v-5h-4z" fill="#f0cc40" />
        <circle cx="39" cy="6" r="3" fill="#80acda" />
        <path d="M32 27h-9M45 27h9M32 32h-4M45 32h6M38.5 24v12M33 44h12" stroke="#80acda" strokeWidth="1.5" fill="none" />
        <path d="M27 69q12 6 24 0" fill="none" stroke="#80acda" />
        <path id="coin-arc" d="M0 43A39 39 0 0 0 35 78" fill="none" />
        <text fontSize="9" fontWeight="bold" fill="#ffffff">
            <textPath href="#coin-arc"><tspan dy="-2">www.9m8.cn</tspan></textPath>
        </text>
    </BannerLogo>
);

/* ---------- bottom bars ---------- */

const STATUS = [
    ['深证', ['9178.78', '-3.16', '-0.03%'], '1536亿'],
    ['中小', ['6352.48', '-21.33', '-0.33%'], '609.8亿'],
    ['沪深', ['3517.66', '2.58', '0.07%'], '500.2亿'],
];

const Status = () => (
    <StatusBar>
        <StatusGroup $short><StatusTotal $short>1195亿</StatusTotal></StatusGroup>
        {STATUS.map(([name, numbers, total]) => (
            <StatusGroup key={name}>
                <span>{name}</span>
                {numbers.map(n => <StatusNumber key={n} $up={name === '沪深'}>{n}</StatusNumber>)}
                <StatusTotal>{total}</StatusTotal>
            </StatusGroup>
        ))}
    </StatusBar>
);

const Tasks = () => (
    <TaskBar>
        <StartButton><FlagLogo />开始</StartButton>
        <TaskButton><TdxLogo /><span>通达信金融终端<Mono>V7...</Mono></span></TaskButton>
        <TaskButton><GlobeLogo /><span>指标公式分享交流<Mono>...</Mono></span></TaskButton>
        <TaskButton><FolderLogo /><Mono>C:\Documents and...</Mono></TaskButton>
        <TaskButton><NoteLogo /><span>通达信去除无用公<Mono>...</Mono></span></TaskButton>
        <TaskButton><ChatLogo />微信</TaskButton>
    </TaskBar>
);

export default function App() {
    return (
        <Page>
            <GlobalStyle />
            <MenuBar>
                <TdxLogo />
                <MenuList>{MENU.map(name => <MenuButton key={name}>{name}</MenuButton>)}</MenuList>
                <WindowTitle>通达信金融终端 涪陵榨菜</WindowTitle>
                <WindowTools>
                    {['行情', '资讯', '交易', '服务'].map(name => <ToolTab key={name}>{name}</ToolTab>)}
                    {['-', '□', '×'].map(name => <RoundTool key={name}>{name}</RoundTool>)}
                </WindowTools>
            </MenuBar>
            <Main>
                <ChartColumn>
                    <PeriodBar>
                        <PeriodList>
                            {PERIODS.map(name => <PeriodButton key={name} $active={name === '日线'}>{name}</PeriodButton>)}
                        </PeriodList>
                        <ActionList>
                            {ACTIONS.map(name => <ActionButton key={name}>{name}</ActionButton>)}
                        </ActionList>
                    </PeriodBar>
                    <MainPanel />
                    <VolumePanel />
                    <SignalPanel />
                    <KdjPanel />
                    <MacdPanel />
                    <DateAxis />
                    <TabRow>
                        {TABS.map((name, i) => <Tab key={name} $narrow={i < 2} $active={i === 2}>{name}</Tab>)}
                    </TabRow>
                    <TabRow $last>
                        {['开弹幕', '扩展∧', '关联报价'].map(name => <Tab key={name}>{name}</Tab>)}
                    </TabRow>
                </ChartColumn>
                <Quotes />
                <Side />
            </Main>
            <Status />
            <Tasks />
            <ToolWindow>
                <svg width="16" height="14" viewBox="0 0 16 14">
                    <rect x="0.5" y="0.5" width="15" height="13" fill="#f4efe4" stroke="#a89880" />
                    <path d="M3 4h5M3 7h9M3 10h9" stroke="#8a7a68" />
                </svg>
                <ToolWindowTitle>综合选股</ToolWindowTitle>
                <FrameButton $color="#3f66dc" aria-label="还原">
                    <svg width="12" height="12" viewBox="0 0 12 12" fill="none" stroke="#ffffff"><path d="M4.5 3.5v-3h7v6h-3M1.5 4.5h6v6h-6zM1 5.5h7" /></svg>
                </FrameButton>
                <FrameButton $color="#7690e4" aria-label="最大化">
                    <svg width="12" height="12" viewBox="0 0 12 12" fill="none" stroke="#9ab0f4"><path d="M1.5 1.5h9v9h-9zM1 3h10" /></svg>
                </FrameButton>
                <FrameButton $color="#b0586c" aria-label="关闭">
                    <svg width="12" height="12" viewBox="0 0 12 12" stroke="#ffffff" strokeWidth="2"><path d="M1 1l10 10M11 1L1 11" /></svg>
                </FrameButton>
            </ToolWindow>
            <TopBanner>
                <BannerLine>
                    <BannerName>股海网</BannerName>
                    <BannerNote>股票软件资源分享</BannerNote>
                </BannerLine>
                <BannerSite>Www.Guhai.com.cn</BannerSite>
            </TopBanner>
            <BottomBanner>
                <BannerTitle>公式指标网</BannerTitle>
                <CoinLogo />
                <BannerAddress>www.9m8.cn</BannerAddress>
            </BottomBanner>
        </Page>
    );
}
